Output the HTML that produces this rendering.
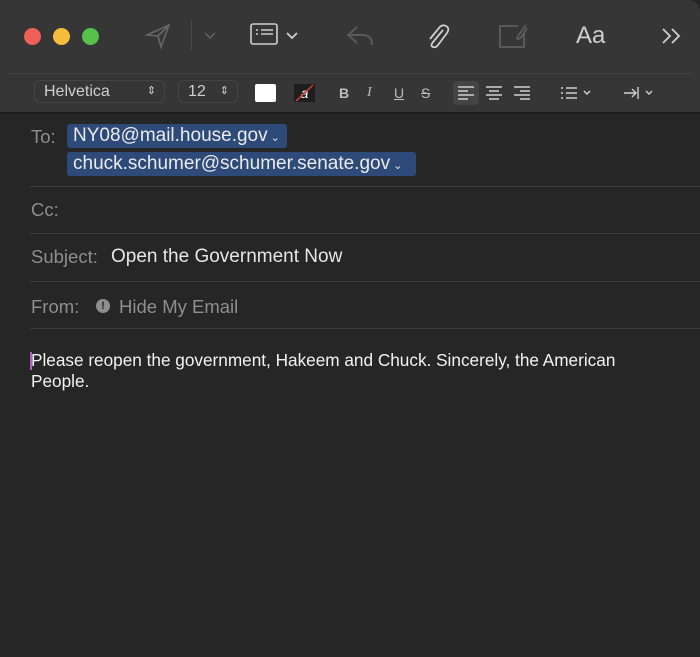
<!DOCTYPE html>
<html><head><style>
*{margin:0;padding:0;box-sizing:border-box}
body{width:700px;height:657px;background:#262626;font-family:"Liberation Sans",sans-serif;position:relative;overflow:hidden}
.tb{position:absolute;left:0;top:0;width:700px;height:113px;background:#363636;border-top-right-radius:12px}
.line{position:absolute;height:1px;background:#444}
.dot{position:absolute;top:28px;width:17px;height:17px;border-radius:50%}
.ab{position:absolute}
.pill{position:absolute;height:23px;border:1px solid #444;border-radius:6px;color:#cfcfcf;font-size:16px;line-height:21px;padding-left:9px}
.lbl{position:absolute;color:#8e8e8e;font-size:18.5px}
.chip{position:absolute;height:24px;background:#2d4a78;border-radius:3px;color:#eaeaea;font-size:19px;line-height:24px;padding-left:6px;white-space:nowrap}
.hr{position:absolute;left:30px;right:0;height:1px;background:#3c3c3c}
.fb{position:absolute;color:#bdbdbd;font-size:14px}
</style></head><body>
<div class="tb"></div>
<div class="dot" style="left:24px;background:#ee5f57"></div>
<div class="dot" style="left:53px;background:#f6bd3c"></div>
<div class="dot" style="left:82px;background:#56c14b"></div>
<svg class="ab" style="left:144px;top:22px" width="28" height="28" viewBox="0 0 28 28" fill="none" stroke="#666" stroke-width="1.6"><path d="M3 13 L25 3 L17 25 L14 14 Z M14 14 L25 3"/></svg>
<div class="ab" style="left:191px;top:20px;width:1px;height:30px;background:#4a4a4a"></div>
<svg class="ab" style="left:204px;top:32px" width="12" height="8" viewBox="0 0 12 8" fill="none" stroke="#5e5e5e" stroke-width="1.6"><path d="M1 1 L6 6 L11 1"/></svg>
<svg class="ab" style="left:250px;top:23px" width="30" height="24" viewBox="0 0 30 24" fill="none" stroke="#cfcfcf" stroke-width="1.6"><rect x="1" y="1" width="26" height="20" rx="2"/><path d="M6 7h2M11 7h12M6 11h2M11 11h12"/></svg>
<svg class="ab" style="left:286px;top:32px" width="12" height="8" viewBox="0 0 12 8" fill="none" stroke="#cfcfcf" stroke-width="1.8"><path d="M1 1 L6 6 L11 1"/></svg>
<svg class="ab" style="left:345px;top:24px" width="30" height="24" viewBox="0 0 30 24" fill="none" stroke="#5a5a5a" stroke-width="2"><path d="M12 3 L3 11 L12 19 M3 11 H18 Q27 11 27 21"/></svg>
<svg class="ab" style="left:424px;top:22px" width="26" height="28" viewBox="0 0 26 28" fill="none" stroke="#cfcfcf" stroke-width="1.8"><path d="M19 8 L9 20 Q6 24 9 25 Q12 26 14 23 L23 11 Q26 6 22 4 Q18 2 15 6 L6 17"/></svg>
<svg class="ab" style="left:498px;top:22px" width="32" height="28" viewBox="0 0 32 28" fill="none" stroke="#5e5e5e" stroke-width="1.8"><path d="M20 4 H2 V25 H26 V12"/><path d="M28 3 L20 14 Q18 17 20 17 Q22 17 24 14 L29 6"/></svg>
<div class="ab" style="left:576px;top:22px;color:#cfcfcf;font-size:24px">Aa</div>
<svg class="ab" style="left:661px;top:27px" width="22" height="18" viewBox="0 0 22 18" fill="none" stroke="#cfcfcf" stroke-width="1.8"><path d="M2 2 L9 9 L2 16 M11 2 L18 9 L11 16"/></svg>
<div class="line" style="left:8px;right:8px;top:73px;background:#424242"></div>
<div class="pill" style="left:34px;top:80px;width:131px">Helvetica<span style="position:absolute;right:8px;font-size:11px">⇕</span></div>
<div class="pill" style="left:178px;top:80px;width:60px">12<span style="position:absolute;right:8px;font-size:11px">⇕</span></div>
<div class="ab" style="left:255px;top:84px;width:21px;height:18px;background:#fff;border-radius:2px"></div>
<div class="ab" style="left:294px;top:84px;width:21px;height:18px;background:#1e1e1e;color:#fff;font-size:14px;text-align:center;line-height:18px;font-style:italic">a</div>
<svg class="ab" style="left:294px;top:84px" width="21" height="18"><path d="M2 17 L19 1" stroke="#e0433a" stroke-width="1.3"/></svg>
<div class="fb" style="left:339px;top:85px;font-weight:bold">B</div>
<div class="fb" style="left:367px;top:85px;font-style:italic;font-family:'Liberation Serif',serif">I</div>
<div class="fb" style="left:394px;top:85px;text-decoration:underline">U</div>
<div class="fb" style="left:421px;top:85px;text-decoration:line-through">S</div>
<div class="ab" style="left:453px;top:81px;width:26px;height:24px;background:#444;border-radius:4px"></div>
<svg class="ab" style="left:457px;top:85px" width="90" height="16" fill="none" stroke="#cfcfcf" stroke-width="1.4"><path d="M1 2h16M1 6h10M1 10h16M1 14h10"/><path d="M29 2h16M32 6h10M29 10h16M32 14h10"/><path d="M57 2h16M63 6h10M57 10h16M63 14h10"/></svg>
<svg class="ab" style="left:560px;top:86px" width="36" height="14" fill="none" stroke="#cfcfcf" stroke-width="1.4"><path d="M1 2h2M1 7h2M1 12h2M6 2h11M6 7h11M6 12h11M24 5l3 3 3-3"/></svg>
<svg class="ab" style="left:623px;top:86px" width="32" height="14" fill="none" stroke="#cfcfcf" stroke-width="1.4"><path d="M1 7h12M9 3l4 4-4 4M15 1v12M23 5l3 3 3-3"/></svg>
<div class="ab" style="left:0;top:112px;width:700px;height:2px;background:#1c1c1c"></div>
<div class="lbl" style="left:31px;top:126px">To:</div>
<div class="chip" style="left:67px;top:124px;width:220px">NY08@mail.house.gov<span style="font-size:11px"> ⌄</span></div>
<div class="chip" style="left:67px;top:152px;width:349px">chuck.schumer@schumer.senate.gov<span style="font-size:11px"> ⌄</span></div>
<div class="hr" style="top:186px"></div>
<div class="lbl" style="left:31px;top:199px">Cc:</div>
<div class="hr" style="top:233px"></div>
<div class="lbl" style="left:31px;top:246px">Subject:</div>
<div class="ab" style="left:111px;top:246px;color:#e6e6e6;font-size:19px">Open the Government Now</div>
<div class="hr" style="top:281px"></div>
<div class="lbl" style="left:31px;top:296px">From:</div>
<div class="ab" style="left:96px;top:299px;width:14px;height:14px;border-radius:50%;background:#8e8e8e;color:#262626;font-size:11px;font-weight:bold;text-align:center;line-height:14px">!</div>
<div class="lbl" style="left:119px;top:296px">Hide My Email</div>
<div class="hr" style="top:328px"></div>
<div class="ab" style="left:30px;top:352px;width:2px;height:18px;background:#b05ec0"></div>
<div class="ab" style="left:31px;top:350px;width:600px;color:#f2f2f2;font-size:17.2px;line-height:21px">Please reopen the government, Hakeem and Chuck. Sincerely, the American People.</div>
</body></html>
